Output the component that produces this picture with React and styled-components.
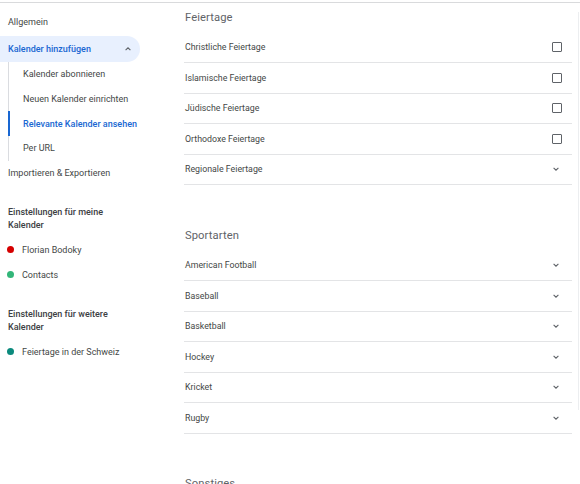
import React from 'react'
import styled, { createGlobalStyle } from 'styled-components'

const GlobalStyle = createGlobalStyle`
    html, body {
        margin: 0;
        padding: 0;
        background: #ffffff;
    }
    body {
        font-family: Roboto, "Noto Sans", Arial, sans-serif;
        color: #3c4043;
        overflow: hidden;
    }
`

const Page = styled.div`
    position: relative;
    width: 580px;
    height: 484px;
    overflow: hidden;
    padding-top: 2px;
    box-sizing: border-box;
    display: grid;
    grid-template-columns: 160px 1fr;

    &::before {
        content: '';
        position: absolute;
        left: 0;
        right: 0;
        top: 2px;
        height: 1px;
        background: #d9dadc;
    }
`

const ScrollTrack = styled.div`
    position: absolute;
    right: 1px;
    top: 12px;
    height: 398px;
    width: 1px;
    background: #eceef0;
`

const Sidebar = styled.nav`
    display: flex;
    flex-direction: column;
    padding-top: 8px;
`

const NavItem = styled.div`
    height: 24.5px;
    display: flex;
    align-items: center;
    padding-left: 8px;
    font-size: 9px;
    color: #444746;
`

const ExpandedItem = styled(NavItem)`
    height: 26px;
    margin-top: 1.5px;
    width: 140px;
    box-sizing: border-box;
    justify-content: space-between;
    padding-right: 8px;
    background: #e8f0fe;
    border-radius: 0 13px 13px 0;
    color: #1967d2;
    font-weight: 500;
`

const SubList = styled.div`
    margin-left: 8px;
    border-left: 1px solid #dadce0;
    display: flex;
    flex-direction: column;
`

const SubItem = styled.div`
    height: 24.7px;
    display: flex;
    align-items: center;
    padding-left: 13px;
    margin-left: -1px;
    font-size: 9px;
    color: ${p => (p.$active ? '#1967d2' : '#444746')};
    font-weight: ${p => (p.$active ? 500 : 400)};
    border-left: 2px solid ${p => (p.$active ? '#1967d2' : 'transparent')};
    box-sizing: border-box;
`

const GroupTitle = styled.div`
    padding: 0 20px 0 8px;
    margin-top: 21px;
    margin-bottom: 5px;
    font-size: 9px;
    line-height: 13px;
    font-weight: 500;
    color: #3c4043;
`

const CalendarItem = styled.div`
    height: 25px;
    display: flex;
    align-items: center;
    padding-left: 7px;
    gap: 8px;
    font-size: 9px;
    color: #444746;
`

const Dot = styled.span`
    width: 7px;
    height: 7px;
    border-radius: 50%;
    background: ${p => p.$color};
    flex: none;
`

const Main = styled.main`
    padding: 0 8px 0 24px;
    display: flex;
    flex-direction: column;
`

const Section = styled.section`
    display: flex;
    flex-direction: column;
    & + & {
        margin-top: 35px;
    }
`

const SectionTitle = styled.h2`
    margin: 0;
    height: 30.5px;
    display: flex;
    align-items: center;
    padding-left: 1px;
    font-size: 11.2px;
    font-weight: 400;
    color: #5f6368;
    letter-spacing: 0.1px;
`

const Row = styled.div`
    height: 30.5px;
    box-sizing: border-box;
    border-bottom: 1px solid #e3e4e6;
    display: flex;
    align-items: center;
    justify-content: space-between;
    padding: 0 10px 0 1px;
    font-size: 8.8px;
    color: #444746;
`

const Checkbox = styled.span`
    width: 8px;
    height: 8px;
    border: 1.4px solid #5f6368;
    border-radius: 1px;
`

const ChevronDown = () => (
    <svg width="8" height="8" viewBox="0 0 8 8" style={{ marginRight: 2 }}>
        <path d="M1.6 2.8 L4 5.2 L6.4 2.8" fill="none" stroke="#5f6368" strokeWidth="1.1" />
    </svg>
)

const ChevronUp = () => (
    <svg width="8" height="8" viewBox="0 0 8 8">
        <path d="M1.6 5.2 L4 2.8 L6.4 5.2" fill="none" stroke="#5f6368" strokeWidth="1.1" />
    </svg>
)

const holidays = [
    { label: 'Christliche Feiertage', type: 'check' },
    { label: 'Islamische Feiertage', type: 'check' },
    { label: 'Jüdische Feiertage', type: 'check' },
    { label: 'Orthodoxe Feiertage', type: 'check' },
    { label: 'Regionale Feiertage', type: 'expand' },
]

const sports = ['American Football', 'Baseball', 'Basketball', 'Hockey', 'Kricket', 'Rugby']

const App = () => {
    return (
        <>
            <GlobalStyle />
            <Page>
                <Sidebar>
                    <NavItem>Allgemein</NavItem>
                    <ExpandedItem>
                        <span>Kalender hinzufügen</span>
                        <ChevronUp />
                    </ExpandedItem>
                    <SubList>
                        <SubItem>Kalender abonnieren</SubItem>
                        <SubItem>Neuen Kalender einrichten</SubItem>
                        <SubItem $active>Relevante Kalender ansehen</SubItem>
                        <SubItem>Per URL</SubItem>
                    </SubList>
                    <NavItem>Importieren &amp; Exportieren</NavItem>

                    <GroupTitle>Einstellungen für meine Kalender</GroupTitle>
                    <CalendarItem>
                        <Dot $color="#d50000" />
                        Florian Bodoky
                    </CalendarItem>
                    <CalendarItem>
                        <Dot $color="#33b679" />
                        Contacts
                    </CalendarItem>

                    <GroupTitle>Einstellungen für weitere Kalender</GroupTitle>
                    <CalendarItem>
                        <Dot $color="#0b8a7d" />
                        Feiertage in der Schweiz
                    </CalendarItem>
                </Sidebar>

                <Main>
                    <Section>
                        <SectionTitle>Feiertage</SectionTitle>
                        {holidays.map(h => (
                            <Row key={h.label}>
                                <span>{h.label}</span>
                                {h.type === 'check' ? <Checkbox /> : <ChevronDown />}
                            </Row>
                        ))}
                    </Section>
                    <Section>
                        <SectionTitle>Sportarten</SectionTitle>
                        {sports.map(s => (
                            <Row key={s}>
                                <span>{s}</span>
                                <ChevronDown />
                            </Row>
                        ))}
                    </Section>
                    <Section>
                        <SectionTitle>Sonstiges</SectionTitle>
                    </Section>
                </Main>
                <ScrollTrack />
            </Page>
        </>
    )
}

export default App
